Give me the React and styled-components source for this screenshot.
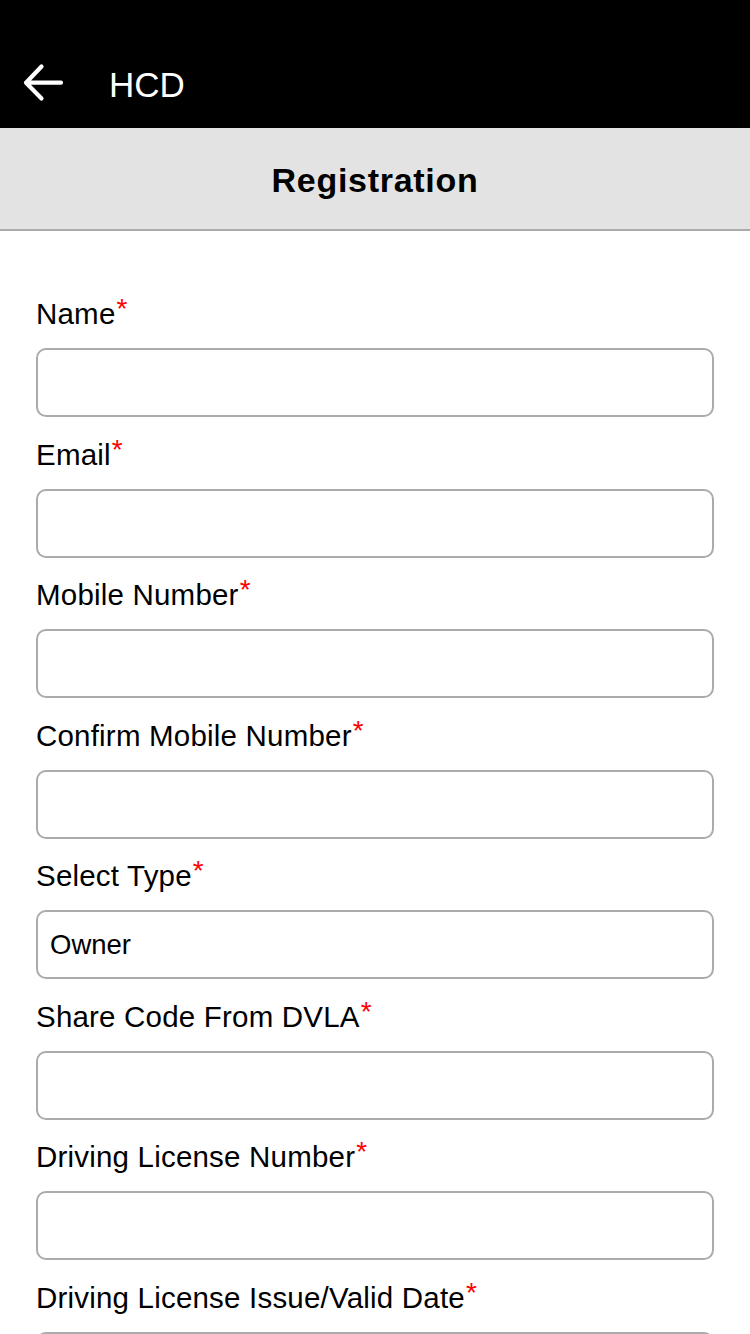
import React from "react";
import styled, { createGlobalStyle } from "styled-components";

const Global = createGlobalStyle`
  html, body { margin: 0; padding: 0; background: #fff; }
  body { font-family: "Liberation Sans", Arial, Helvetica, sans-serif; color: #000; }
  * { box-sizing: border-box; }
`;

const Page = styled.div`
  width: 750px;
  min-height: 1334px;
  background: #fff;
`;

const TopBar = styled.header`
  background: #000;
  height: 128px;
  padding-top: 40px;
  display: flex;
  align-items: center;
  color: #fff;
`;

const BackButton = styled.button`
  background: none;
  border: 0;
  padding: 0;
  margin-left: 22px;
  width: 44px;
  height: 44px;
  display: flex;
  align-items: center;
  justify-content: center;
  cursor: pointer;
`;

const AppTitle = styled.h1`
  margin: 0 0 0 43px;
  font-size: 35px;
  font-weight: 400;
  line-height: 1;
`;

const SubHeader = styled.div`
  background: #e3e3e3;
  height: 103px;
  border-bottom: 2px solid #ababab;
  display: flex;
  align-items: center;
  justify-content: center;
`;

const SubTitle = styled.h2`
  margin: 4px 0 0;
  font-size: 34px;
  font-weight: 700;
  letter-spacing: 0.7px;
`;

const Form = styled.form`
  padding: 66px 36px 0;
  display: flex;
  flex-direction: column;
  gap: 20.5px;
`;

const Field = styled.div`
  display: flex;
  flex-direction: column;
`;

const Label = styled.label`
  font-size: 29.5px;
  letter-spacing: 0.2px;
  line-height: 34px;
  margin-bottom: 17px;
  white-space: nowrap;
`;

const Req = styled.span`
  color: #f00;
  font-size: 28px;
  line-height: 1;
  vertical-align: top;
  position: relative;
  top: -2px;
  margin-left: 1px;
`;

const Input = styled.input`
  height: 69px;
  width: 100%;
  border: 2px solid #ababab;
  border-radius: 10px;
  padding: 0 12px;
  font-family: inherit;
  font-size: 27.5px;
  color: #000;
  background: #fff;
  outline: none;
`;

const fields = [
  { label: "Name" },
  { label: "Email" },
  { label: "Mobile Number" },
  { label: "Confirm Mobile Number" },
  { label: "Select Type", value: "Owner" },
  { label: "Share Code From DVLA" },
  { label: "Driving License Number" },
  { label: "Driving License Issue/Valid Date" },
];

export default function App() {
  return (
    <Page>
      <Global />
      <TopBar>
        <BackButton aria-label="Back">
          <svg width="44" height="44" viewBox="0 0 44 44" fill="none">
            <path
              d="M4 20.7 H39 M4 20.7 L19.5 4.5 M4 20.7 L19.5 36.5"
              stroke="#fff"
              strokeWidth="4.2"
              strokeLinecap="round"
              strokeLinejoin="round"
            />
          </svg>
        </BackButton>
        <AppTitle>HCD</AppTitle>
      </TopBar>
      <SubHeader>
        <SubTitle>Registration</SubTitle>
      </SubHeader>
      <Form onSubmit={(e) => e.preventDefault()}>
        {fields.map((f) => (
          <Field key={f.label}>
            <Label>
              {f.label}
              <Req>*</Req>
            </Label>
            <Input defaultValue={f.value || ""} readOnly={!!f.value} />
          </Field>
        ))}
      </Form>
    </Page>
  );
}
